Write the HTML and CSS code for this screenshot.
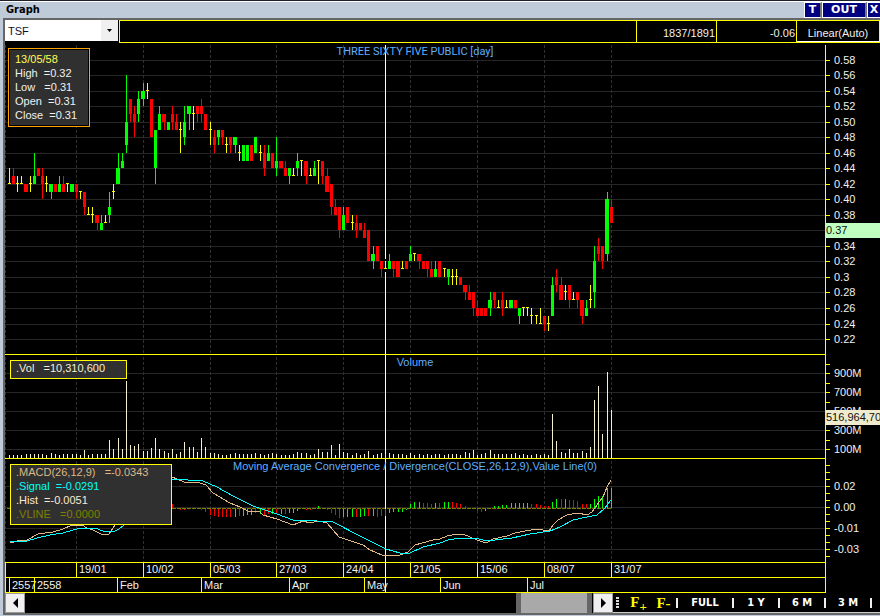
FILE: index.html
```
<!DOCTYPE html>
<html lang="en">
<head>
    <meta charset="UTF-8">
    <title>Graph</title>
    <link rel="stylesheet" href="styles.css">
</head>
<body>

<header class="titlebar">
    <h1>Graph</h1>
    <div class="window-buttons">
        <button type="button" class="btn-t">T</button>
        <button type="button" class="btn-out">OUT</button>
        <button type="button" class="btn-x">X</button>
    </div>
</header>

<main class="window">
    <div class="toolbar">
        <div class="symbol">
            <select id="symbol" name="symbol" aria-label="Symbol">
                <option>TSF</option>
            </select>
            <svg class="arrow" width="5" height="3"><path d="M0 0h5L2.500 3z"/></svg>
        </div>
        <div class="cell message"></div>
        <div class="cell">1837/1891</div>
        <div class="cell">-0.06</div>
        <button type="button" class="scale">Linear(Auto)</button>
    </div>

    <div class="chart">
        <section class="panel price">
            <svg id="pricePlot"></svg>
            <h2>THREE SIXTY FIVE PUBLIC [day]</h2>
            <div class="info ohlc">
                <p class="date">13/05/58</p>
                <p>High  =0.32</p>
                <p>Low   =0.31</p>
                <p>Open  =0.31</p>
                <p>Close  =0.31</p>
            </div>
        </section>
        <svg id="priceAxis" class="axis"></svg>

        <section class="panel volume">
            <svg id="volumePlot"></svg>
            <h2>Volume</h2>
            <div class="info vol">
                <p>.Vol   =10,310,600</p>
            </div>
        </section>
        <svg id="volumeAxis" class="axis"></svg>

        <section class="panel macd">
            <svg id="macdPlot"></svg>
            <h2>Moving Average Convergence / Divergence(CLOSE,26,12,9),Value Line(0)</h2>
            <div class="info values">
                <p class="tan">.MACD(26,12,9)   =-0.0343</p>
                <p class="cyan">.Signal  =-0.0291</p>
                <p class="hist">.Hist  =-0.0051</p>
                <p class="olive">.VLINE   =0.0000</p>
            </div>
        </section>
        <svg id="macdAxis" class="axis"></svg>

        <section class="panel dates">
            <svg id="datesPlot"></svg>
        </section>
        <svg id="datesAxis" class="axis"></svg>
    </div>

    <footer class="bottom">
        <div class="scroller">
            <button type="button" class="step" aria-label="Scroll left"><svg width="5" height="10"><path d="M5 0v10L0 5z"/></svg></button>
            <div class="thumb"></div>
            <button type="button" class="step" aria-label="Scroll right"><svg width="5" height="10"><path d="M0 0v10L5 5z"/></svg></button>
        </div>
        <nav class="tools">
            <i class="grip"></i>
            <button type="button" class="font">F<sub>+</sub></button>
            <button type="button" class="font">F-</button>
            <i class="sep"></i>
            <button type="button" class="full">FULL</button>
            <i class="sep"></i>
            <button type="button" class="range">1 Y</button>
            <i class="sep"></i>
            <button type="button" class="range">6 M</button>
            <i class="sep"></i>
            <button type="button" class="range">3 M</button>
            <i class="sep"></i>
        </nav>
    </footer>
</main>

<script src="chart.js"></script>
</body>
</html>
```
FILE: styles.css
```
* {
    box-sizing: border-box;
}

body {
    margin: 0;
    background-color: #bfcbd8;
    color: #f0f0f0;
    font-family: "Liberation Sans", Arial, sans-serif;
    font-size: 11px;
    line-height: 14px;
    overflow: hidden;
}

h1, h2, p {
    margin: 0;
}

button {
    border: none;
    padding: 0;
    font: inherit;
    color: inherit;
    background: none;
}

.titlebar {
    display: flex;
    justify-content: space-between;
    height: 18px;
    padding-left: 6px;
    border-top: 1px solid #20202a;
    box-shadow: inset 0 1px #fff;
}

.titlebar h1 {
    color: #000;
    font: bold 11px/18px "DejaVu Sans Condensed", "DejaVu Sans", sans-serif;
}

.window-buttons {
    display: flex;
    padding-top: 1px;
}

.window-buttons button {
    height: 16px;
    color: #fff;
    background-color: #000080;
    border: 1px solid #fff;
    border-right: 2px solid #777;
    font: bold 11px/14px "DejaVu Sans", sans-serif;
}

.window-buttons .btn-t {
    width: 18px;
}

.window-buttons .btn-out {
    width: 45px;
}

.window-buttons .btn-x {
    width: 13px;
    border-right: none;
}

.window {
    margin-left: 3px;
    background-color: #000;
    border: solid #666;
    border-width: 2px 0 2px 2px;
}

/* top row */

.toolbar {
    display: flex;
    height: 23px;
}

.symbol {
    position: relative;
    width: 114px;
    height: 21px;
}

.symbol select {
    width: 113px;
    height: 21px;
    padding: 0 3px;
    border: none;
    border-radius: 0;
    appearance: none;
    color: #101030;
    background: linear-gradient(90deg, #fff 96px, #f0f0f0 96px);
    font: inherit;
}

.symbol .arrow {
    position: absolute;
    right: 7px;
    top: 9px;
}

.cell {
    width: 80px;
    padding-right: 1px;
    border: 1px solid #ff0;
    border-right: none;
    line-height: 25px;
    text-align: right;
}

.message {
    flex: 1;
}

.scale {
    width: 84px;
    border: 1px solid #ff0;
    box-shadow: inset 0 -1px #fff;
    line-height: 25px;
}

/* chart */

.chart {
    display: grid;
    grid-template-columns: 1fr 55px;
}

.panel {
    position: relative;
}

.panel svg, .axis {
    display: block;
    width: 100%;
    height: 104px;
    shape-rendering: crispEdges;
}

.price svg, #priceAxis {
    height: 312px;
}

.dates svg, #datesAxis {
    height: 30px;
}

.panel h2 {
    position: absolute;
    top: 0;
    left: 0;
    right: 0;
    color: #5fafff;
    font-size: 11px;
    font-weight: normal;
    text-align: center;
}

.price h2 {
    top: 2px;
    font-family: Roboto, sans-serif;
}

svg text {
    fill: #f0f0f0;
}

svg .dark {
    fill: #101010;
}

.info {
    position: absolute;
    left: 5px;
    top: 5px;
    padding: 0 5px;
    background-color: #303030;
    border: 1px solid #ff0;
}

.info p {
    white-space: pre;
}

.ohlc {
    left: 3px;
    width: 82px;
    height: 79px;
    padding: 3px 6px;
    border-color: #ffa500;
    box-shadow: inset 0 0 0 1px #000;
}

.vol {
    width: 117px;
    height: 19px;
    color: #f5f0d0;
}

.values {
    width: 162px;
    height: 61px;
}

.date {
    color: #ff5;
}

.tan {
    color: #deb887;
}

.cyan {
    color: #0ff;
}

.hist {
    color: #ffe8d0;
}

.olive {
    color: #808000;
}

/* bottom row */

.bottom {
    display: flex;
    height: 20px;
}

.scroller {
    display: flex;
    flex: 1;
}

.step {
    display: flex;
    align-items: center;
    justify-content: center;
    width: 20px;
    background-color: #f0f0f0;
    border: 1px solid #999;
}

.thumb {
    width: 76px;
    margin: 0 1px 0 auto;
    background-color: #a9a9a9;
    border: solid #666;
    border-width: 0 5px;
}

.tools {
    display: flex;
    align-items: center;
    width: 267px;
    border-bottom: 1px solid #ccc;
    color: #fff;
    font: bold 11px/14px "DejaVu Sans Condensed", "DejaVu Sans", sans-serif;
}

.grip {
    width: 3px;
    height: 12px;
    margin: 0 7px 0 3px;
    background: repeating-linear-gradient(#ddd 0 2px, #000 2px 3px);
}

.font {
    width: 25px;
    color: #ff0;
    font: bold 15px/16px "Liberation Serif", serif;
}

.font sub {
    font-size: 13px;
    line-height: 8px;
}

.sep {
    width: 2px;
    height: 10px;
    background-color: #eee;
}

.full {
    width: 54px;
}

.range {
    width: 44px;
}
```
FILE: chart.js
```
const YELLOW = "#ff0", GREEN = "#0f0", RED = "#f00", GRID = "#262626";

// open, high, low, close in satang
const candles = `42 44 42 42|43 44 42 42|42 43 41 42|42 43 42 42|42 42 41 41|42 43 41 42|42 46 42 43|44 44 43 43
43 44 40 42|42 43 41 42|41 42 40 42|42 42 41 41|41 43 41 42|42 43 41 41|42 42 41 42|41 42 41 42
42 42 40 41|41 41 40 41|41 41 38 39|38 39 38 38|38 39 37 38|38 38 36 37|36 38 36 37|37 38 37 37
38 41 37 39|41 42 40 41|42 46 42 44|44 46 44 45|47 56 46 50|53 53 50 51|51 52 48 50|51 54 50 53
53 55 52 54|54 55 53 54|53 53 48 48|44 49 42 49|49 52 49 51|51 51 49 50|49 50 49 50|51 52 49 50
50 51 49 49|49 50 46 49|48 52 47 50|51 52 49 52|51 52 49 51|52 52 50 51|52 53 50 51|51 51 49 49
49 50 47 49|48 49 46 47|48 49 47 49|49 49 47 48|47 48 46 47|48 48 46 47|47 48 46 48|46 47 45 46
45 47 45 47|45 47 45 47|47 47 45 45|46 48 46 48|46 47 45 46|46 47 43 44|45 47 45 46|46 46 44 44
44 48 43 45|45 45 44 44|44 45 43 43|43 44 42 44|43 44 43 43|44 46 43 45|45 45 43 45|45 45 42 43
43 44 43 43|43 45 43 44|45 45 42 45|45 45 42 43|43 44 41 41|42 42 38 39|39 40 38 38|39 39 35 36
36 39 36 38|39 39 37 37|37 38 36 37|37 38 35 36|37 37 36 36|36 37 35 35|36 36 32 32|32 34 31 33
34 34 32 32|32 32 30 31|31 32 31 31|31 33 31 32|32 32 30 31|32 32 30 30|31 32 31 31|32 32 31 31
32 34 32 33|33 33 32 33|33 33 31 32|32 32 31 31|32 32 30 31|31 32 30 30|30 32 30 31|32 32 30 30
31 31 30 31|30 31 29 31|30 31 29 30|30 31 29 30|30 30 29 29|29 29 27 28|28 29 27 27|28 28 25 26
26 27 25 25|26 26 25 25|26 26 25 25|26 28 25 27|28 28 26 27|26 27 26 26|27 28 25 26|26 27 26 26
26 27 26 27|27 27 26 26|25 26 24 26|26 26 25 26|26 26 25 26|25 26 24 25|25 25 24 25|24 26 24 24
25 25 23 24|24 25 23 24|25 30 25 29|30 31 28 29|29 30 27 27|28 29 27 28|29 29 26 27|27 28 27 27
28 28 26 27|27 27 24 25|25 27 25 26|27 29 26 27|28 34 26 32|34 35 32 33|34 34 31 32|33 41 32 40
39 40 37 37`.split(/[|\n]/).map(row => row.split(" ").map(Number));

const volumes = [
    3, 3, 3, 3, 4, 4, 4, 4, 4, 3, 5, 4, 3, 4, 4, 4, 4, 3, 8, 3, 4, 4, 4, 4, 18, 9, 20, 9, 77, 13, 12, 14,
    7, 7, 10, 20, 9, 7, 5, 9, 4, 6, 16, 11, 11, 6, 20, 11, 5, 5, 4, 3, 3, 4, 5, 4, 4, 4, 4, 5, 4, 3, 4, 5,
    4, 3, 3, 3, 4, 6, 5, 5, 3, 4, 9, 6, 6, 13, 3, 14, 6, 5, 3, 5, 3, 4, 7, 3, 4, 5, 4, 5, 4, 4, 4, 3,
    5, 3, 4, 3, 4, 3, 4, 4, 3, 4, 4, 4, 3, 6, 5, 8, 3, 4, 5, 8, 4, 4, 4, 4, 4, 5, 3, 4, 3, 3, 4, 3,
    4, 3, 44, 17, 6, 5, 9, 5, 5, 7, 5, 11, 58, 72, 24, 86, 48
];

// histogram from candle 39 on, colour letter and height
const histogram = `r4 r0 r-1 r-1 r0 r0 r0 r-1 r-3 r-6 r-7 r-8 r-8 r-8 r-8 g-8 r-7 g-7 g-6 g-6 r-4 g-5 r-6 r-5 g-5 r-5
g-5 r-5 g-4 g-4 g-2 r0 r-1 r-1 r0 g2 r0 r-1 r-4 r-6 r-9 g-8 g-8 g-8 r-8 g-8 g-7 r-7 g-7 r-8 r-7 m-7 g-4 g-3 g-3
g-3 g-1 g4 g6 g6 r5 r5 r4 g5 r5 g6 g6 r6 r5 r4 r2 r0 r0 r-2 r-3 g-2 r0 g2 g2 g3 g3 g5 g5 g5 g5 g5 r4 r4 r3 r2 r2
g6 g9 r9 g9 r8 r8 r7 r4 r4 g4 g9 g12 g12 g20 g20`.split(/\s/);

const macdLine = `5,84 12,82 22,81 33,75 48,73 58,70 67,66 77,66 82,69 88,71 98,76 104,75 110,66 125,40 150,12 167,18
172,20 179,23 195,24 201,26 208,34 225,44 235,48 243,52 247,53 254,52 258,56 272,60 288,66 298,62 305,64 314,62
322,64 328,71 334,78 358,86 365,91 377,96 381,97 395,96 403,93 410,86 417,84 428,81 435,80 442,77 452,75 458,75
465,78 472,81 481,84 488,80 502,77 510,74 520,72 532,70 544,72 548,66 553,61 562,56 573,54 582,56 587,53 592,46
598,38 602,28 606,21`;

const signalLine = `5,82 22,82 32,79 45,76 58,74 75,69 90,69 98,72 108,73 114,70 119,66 150,25 167,20 198,22 212,28
228,37 248,47 272,55 288,61 312,62 328,63 355,77 381,90 395,94 405,94 418,88 435,84 443,81 455,79 470,79 482,82
490,81 507,79 525,75 545,72 555,68 568,61 582,58 592,56 600,49 606,41`;

const CURSOR = 90;
const dates = ["19/01", "10/02", "05/03", "27/03", "24/04", "21/05", "15/06", "08/07", "31/07"];
const months = [[4, "2557"], [29, "2558"], [112, "Feb"], [196, "Mar"], [284, "Apr"], [359, "May"], [435, "Jun"], [522, "Jul"]];

const xOf = i => Math.floor(4.335 + i * 4.1806);
const yOf = price => Math.floor(17.2 + (58 - price) * 7.76);

function add(id, tag, attrs, text) {
    const node = document.createElementNS("http://www.w3.org/2000/svg", tag);
    for (const [name, value] of Object.entries(attrs)) {
        node.setAttribute(name, value);
    }
    if (text) {
        node.textContent = text;
    }
    document.getElementById(id).append(node);
}

function rect(id, x, y, width, height, fill) {
    add(id, "rect", {x, y, width, height, fill});
}

function label(id, x, y, text, cls) {
    add(id, "text", {x, y, class: cls || ""}, text);
}

function drawGrid(id, rows, height) {
    rows.forEach(y => rect(id, 0, y, "100%", 1, GRID));
    for (let i = 0; i <= 144; i += 16) {
        const x = xOf(i === 0 ? -1 : i) + 0.5;
        add(id, "line", {x1: x, x2: x, y1: 2, y2: height, stroke: "#303030", "stroke-dasharray": "3 2"});
    }
    rect(id, 0, height - 1, "100%", 1, YELLOW);
}

function drawAxis(id, height, ticks, labels) {
    rect(id, 0, id === "priceAxis" ? 2 : 0, 1, height, YELLOW);
    ticks.forEach(y => rect(id, 1, y, 4, 1, YELLOW));
    labels.forEach(([y, text]) => label(id, 9, y + 4, text));
}

// price
const priceRows = [];
const priceLabels = [];
for (let p = 58; p >= 22; p -= 2) {
    priceRows.push(yOf(p));
    // 0.36 lies under the last price tag
    if (p !== 36) {
        priceLabels.push([yOf(p), p === 30 ? "0.3" : (p / 100).toFixed(2)]);
    }
}
drawGrid("pricePlot", priceRows, 312);
rect("pricePlot", xOf(CURSOR), 2, 1, 310, "#fff");
rect("pricePlot", xOf(CURSOR), 216, 1, 13, "#000");
candles.forEach(([open, high, low, close], i) => {
    const x = xOf(i);
    const color = close > open ? GREEN : close < open ? RED : YELLOW;
    rect("pricePlot", x, yOf(high), 1, Math.max(yOf(low) - yOf(high), 1), color);
    if (open === close) {
        rect("pricePlot", x - 1, yOf(close) - 1, 3, 1, color);
    } else {
        const wide = x - xOf(i - 1) === 5 ? 1 : 0;
        rect("pricePlot", x - 1 - wide, yOf(Math.max(open, close)), 3 + wide, Math.abs(yOf(open) - yOf(close)), color);
    }
});
drawAxis("priceAxis", 312, priceRows, priceLabels);
rect("priceAxis", 1, 180, 54, 15, "#c1ffc1");
label("priceAxis", 1, 191, "0.37", "dark");

// volume
drawGrid("volumePlot", [18, 37, 56, 75, 94], 104);
rect("volumePlot", xOf(CURSOR), 0, 1, 104, "#fff");
volumes.forEach((v, i) => rect("volumePlot", xOf(i), 103 - v, 1, v, "#f5f0d0"));
drawAxis("volumeAxis", 104, [9, 18, 28, 37, 47, 56, 66, 75, 85, 94],
    [[18, "900M"], [37, "700M"], [56, "500M"], [75, "300M"], [94, "100M"]]);
rect("volumeAxis", 1, 55, 54, 15, "#f0ebcd");
label("volumeAxis", 1, 66, "516,964,700", "dark");

// macd
drawGrid("macdPlot", [27, 48, 69, 90], 104);
add("macdPlot", "line", {x1: 2, x2: 606, y1: 49.5, y2: 49.5, stroke: "#808000", "stroke-dasharray": "4 1"});
rect("macdPlot", xOf(CURSOR), 0, 1, 104, "#fff");
histogram.forEach((bar, n) => {
    const color = {r: RED, g: GREEN, m: "#f0f"}[bar[0]];
    const h = Number(bar.slice(1));
    rect("macdPlot", xOf(39 + n), h > 0 ? 49 - h : 50, 1, Math.abs(h), color);
});
add("macdPlot", "polyline", {points: macdLine, fill: "none", stroke: "#deb887"});
add("macdPlot", "polyline", {points: signalLine, fill: "none", stroke: "#0ff"});
drawAxis("macdAxis", 104, [6, 13, 20, 27, 34, 41, 48, 55, 62, 69, 76, 83, 90, 97],
    [[27, "0.02"], [48, "0.00"], [69, "-0.01"], [90, "-0.03"]]);

// dates
rect("datesPlot", 0, 14, "100%", 1, YELLOW);
rect("datesPlot", 0, 29, "100%", 1, YELLOW);
rect("datesPlot", 0, 0, 1, 30, YELLOW);
dates.forEach((text, n) => {
    rect("datesPlot", xOf((n + 1) * 16), 0, 1, 14, YELLOW);
    label("datesPlot", xOf((n + 1) * 16) + 3, 10, text);
});
months.forEach(([x, text]) => {
    rect("datesPlot", x, 15, 1, 14, YELLOW);
    label("datesPlot", x + 3, 26, text);
});
rect("datesPlot", xOf(CURSOR), 0, 1, 30, "#fff");
rect("datesAxis", 0, 0, 1, 30, YELLOW);
```
